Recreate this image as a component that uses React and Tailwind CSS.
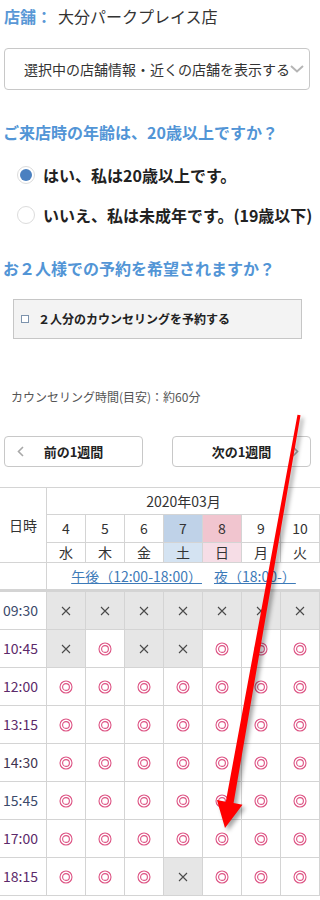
import React from 'react';

const font = { fontFamily: '"Noto Sans CJK JP", "Noto Sans", sans-serif' };

// x = 予約不可, o = 予約可
const rows = [
  { time: '09:30', color: 'text-[#3b4a6b]', cells: 'xxxxxxx' },
  { time: '10:45', color: 'text-[#5c2a6a]', cells: 'xoxxooo' },
  { time: '12:00', color: 'text-[#5c2a6a]', cells: 'ooooooo' },
  { time: '13:15', color: 'text-[#5c2a6a]', cells: 'ooooooo' },
  { time: '14:30', color: 'text-[#3e3450]', cells: 'ooooooo' },
  { time: '15:45', color: 'text-[#3b4a6b]', cells: 'ooooooo' },
  { time: '17:00', color: 'text-[#5c2a6a]', cells: 'ooooooo' },
  { time: '18:15', color: 'text-[#5c2a6a]', cells: 'oooxooo' },
];

const days = [
  { d: '4', w: '水' },
  { d: '5', w: '木' },
  { d: '6', w: '金' },
  { d: '7', w: '土', top: 'bg-[#bfd2e8]', bot: 'bg-[#d4e3f2]' },
  { d: '8', w: '日', top: 'bg-[#f1c5cf]', bot: 'bg-[#f6dde6]' },
  { d: '9', w: '月' },
  { d: '10', w: '火' },
];

const DoubleCircle = () => (
  <svg width="14" height="14" viewBox="0 0 14 14">
    <circle cx="7" cy="7" r="6" fill="none" stroke="#dd5283" strokeWidth="1.1" />
    <circle cx="7" cy="7" r="3.4" fill="none" stroke="#dd5283" strokeWidth="1.1" />
  </svg>
);

const Cross = () => (
  <svg width="10" height="10" viewBox="0 0 10 10">
    <path d="M1 1 L9 9 M9 1 L1 9" stroke="#4a4a4a" strokeWidth="1.1" />
  </svg>
);

const App = () => {
  return (
    <div className="relative w-[320px] bg-white text-[#333] overflow-hidden" style={font}>
      {/* 店舗 */}
      <div className="h-[32px] flex items-center pl-[4px] text-[16px] whitespace-nowrap">
        <span className="font-bold text-[#5a98d6]">店舗：</span>
        <span className="ml-[6px] text-[#333]">大分パークプレイス店</span>
      </div>

      <div className="mt-[16px] ml-[4px] w-[306px] h-[42px] border border-[#c8c8c8] rounded-[4px] flex items-center pl-[19px] overflow-hidden whitespace-nowrap">
        <span className="text-[14px] text-[#333]">選択中の店舗情報・近くの店舗を表示する</span>
        <svg width="14" height="8" viewBox="0 0 14 8" className="shrink-0">
          <path d="M1 1 L7 6.5 L13 1" fill="none" stroke="#b5b5b5" strokeWidth="2" />
        </svg>
      </div>

      {/* 年齢 */}
      <h2 className="mt-[30px] pl-[3px] h-[24px] leading-[24px] text-[16px] font-bold text-[#5295d6] whitespace-nowrap">
        ご来店時の年齢は、20歳以上ですか？
      </h2>
      <div className="mt-[17px] h-[28px] flex items-center pl-[17px] gap-[8px] whitespace-nowrap">
        <span className="w-[18px] h-[18px] rounded-full border border-[#dcdcdc] flex items-center justify-center shrink-0">
          <span className="w-[12px] h-[12px] rounded-full bg-[#4a80c0]" />
        </span>
        <span className="text-[16px] font-bold text-[#222]">はい、私は20歳以上です。</span>
      </div>
      <div className="mt-[12px] h-[28px] flex items-center pl-[17px] gap-[8px] whitespace-nowrap">
        <span className="w-[18px] h-[18px] rounded-full border border-[#dcdcdc] shrink-0" />
        <span className="text-[16px] font-bold text-[#222]">いいえ、私は未成年です。(19歳以下)</span>
      </div>

      {/* 2人予約 */}
      <h2 className="mt-[27px] pl-[3px] h-[24px] leading-[24px] text-[16px] font-bold text-[#5295d6] whitespace-nowrap">
        お２人様での予約を希望されますか？
      </h2>
      <div className="mt-[19px] ml-[13px] w-[289px] h-[40px] bg-[#f3f3f3] border border-[#c6c6c6] flex items-center pl-[7px] gap-[9px]">
        <span className="w-[8px] h-[8px] border border-[#7d93ad] bg-white shrink-0" />
        <span className="text-[12px] font-bold text-[#222] whitespace-nowrap">２人分のカウンセリングを予約する</span>
      </div>

      <p className="mt-[49px] pl-[11px] h-[18px] leading-[18px] text-[12px] text-[#555] whitespace-nowrap">
        カウンセリング時間(目安)：約60分
      </p>

      {/* 週送り */}
      <div className="mt-[30px] flex pl-[4px] gap-[29px]">
        <button className="relative w-[139px] h-[31px] border border-[#c8c8c8] rounded-[4px] bg-white flex items-center justify-center text-[13px] font-bold text-[#222]">
          <svg width="7" height="11" viewBox="0 0 7 11" className="absolute left-[12px] top-[9px]">
            <path d="M6 1 L1.5 5.5 L6 10" fill="none" stroke="#a8a8a8" strokeWidth="1.6" />
          </svg>
          前の1週間
        </button>
        <button className="relative w-[139px] h-[31px] border border-[#c8c8c8] rounded-[4px] bg-white flex items-center justify-center text-[13px] font-bold text-[#222]">
          次の1週間
          <svg width="7" height="11" viewBox="0 0 7 11" className="absolute right-[11px] top-[9px]">
            <path d="M1 1 L5.5 5.5 L1 10" fill="none" stroke="#a8a8a8" strokeWidth="1.6" />
          </svg>
        </button>
      </div>

      {/* カレンダー */}
      <div className="mt-[20px] w-[320px] border-t border-[#d4d4d4] grid grid-cols-[47px_repeat(7,39px)] text-[14px] text-[#333]">
        <div className="row-span-3 border-r border-b border-[#d4d4d4] flex items-center justify-center">日時</div>
        <div className="col-span-7 h-[27px] border-b border-[#d4d4d4] flex items-center justify-center">2020年03月</div>
        {days.map((day) => (
          <div
            key={`d-${day.d}`}
            className={`h-[28px] border-r border-b border-[#d4d4d4] flex items-center justify-center ${day.top || ''}`}
          >
            {day.d}
          </div>
        ))}
        {days.map((day) => (
          <div
            key={`w-${day.d}`}
            className={`h-[20px] border-r border-b border-[#d4d4d4] flex items-center justify-center text-[14px] ${day.bot || ''}`}
          >
            {day.w}
          </div>
        ))}
        <div className="h-[29px] border-r border-b-[3px] border-[#d4d4d4]" />
        <div className="col-span-7 h-[29px] border-b-[3px] border-[#d4d4d4] flex items-center justify-center gap-[12px] text-[14px] text-[#3d7ab8] whitespace-nowrap">
          <a href="#" className="underline">午後（12:00-18:00）</a>
          <a href="#" className="underline">夜（18:00-）</a>
        </div>

        {rows.map((row) => (
          <React.Fragment key={row.time}>
            <div className={`h-[38px] border-r border-b border-[#d4d4d4] flex items-center pl-[3px] ${row.color}`}>
              {row.time}
            </div>
            {row.cells.split('').map((c, i) => (
              <div
                key={i}
                className={`h-[38px] border-r border-b border-[#d4d4d4] flex items-center justify-center ${
                  c === 'x' ? 'bg-[#e6e6e6]' : 'bg-white'
                }`}
              >
                {c === 'x' ? <Cross /> : <DoubleCircle />}
              </div>
            ))}
          </React.Fragment>
        ))}
      </div>
      <div className="h-[4px]" />

      {/* 注目矢印 */}
      <svg
        width="320"
        height="900"
        viewBox="0 0 320 900"
        className="absolute top-0 left-0 pointer-events-none drop-shadow-[3px_3px_2px_rgba(0,0,0,0.35)]"
      >
        <polygon
          points="297.5,414.7 300.5,415.3 233.6,803.1 242.5,804.8 225,828 216.9,800 225.8,801.7"
          fill="#ff0000"
        />
      </svg>
    </div>
  );
};

export default App;
